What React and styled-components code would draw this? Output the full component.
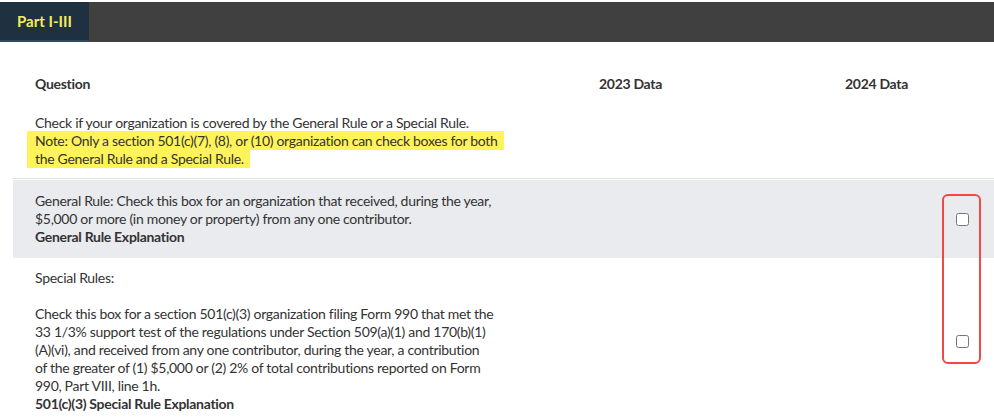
import React from "react";
import styled, { createGlobalStyle } from "styled-components";

const GlobalStyle = createGlobalStyle`
  body {
    margin: 0;
    background: #ffffff;
    font-family: Lato, "Liberation Sans", sans-serif;
    color: #333333;
  }
`;

const TopBar = styled.div`
  margin-top: 2px;
  height: 40px;
  background: #404040;
  display: flex;
`;

const Tab = styled.div`
  width: 89px;
  background: #1f3140;
  border-bottom: 2px solid #2d4b5b;
  box-sizing: border-box;
  color: #f2ec5c;
  font-weight: 700;
  font-size: 15px;
  display: flex;
  align-items: center;
  justify-content: center;
`;

const Table = styled.div`
  position: relative;
  margin: 20px 0 0 13px;
  letter-spacing: -0.3px;
`;

const Row = styled.div`
  display: grid;
  grid-template-columns: 560px 246px 1fr;
  background: ${(p) => (p.$shaded ? "#e9ebee" : "transparent")};
  border-bottom: ${(p) => (p.$divider ? "1px solid #e4e4e4" : "none")};
  margin-bottom: ${(p) => (p.$divider ? "1px" : "0")};
`;

const HeadCell = styled.div`
  padding: 13px 0 11px ${(p) => (p.$first ? "22px" : "26px")};
  font-size: 14px;
  line-height: 18px;
  font-weight: 700;
  color: #333;
`;

const QuestionCell = styled.div`
  padding: ${(p) => p.$pad || "11px"} 0 ${(p) => p.$pad || "11px"} 22px;
  font-size: 14px;
  line-height: 18px;
  color: #333;
  white-space: nowrap;
`;

const Highlight = styled.span`
  background: #fff35c;
  padding: 1px 6px 1px 8px;
  margin-left: -8px;
  -webkit-box-decoration-break: clone;
  box-decoration-break: clone;
`;

const Strong = styled.div`
  font-weight: 700;
`;

const Gap = styled.div`
  height: 18px;
`;

const DataCell = styled.div`
  display: flex;
  align-items: center;
  justify-content: ${(p) => (p.$end ? "flex-end" : "flex-start")};
  padding-right: 25px;
`;

const Check = styled.input.attrs({ type: "checkbox" })`
  width: 13px;
  height: 13px;
  margin: 0;
`;

const Annotation = styled.div`
  position: absolute;
  top: 132px;
  right: 13px;
  width: 39px;
  height: 170px;
  box-sizing: border-box;
  border: 2.5px solid #f24848;
  border-radius: 6px;
  pointer-events: none;
`;

export default function App() {
  return (
    <>
      <GlobalStyle />
      <TopBar>
        <Tab>Part I-III</Tab>
      </TopBar>
      <Table>
        <Row>
          <HeadCell $first>Question</HeadCell>
          <HeadCell>2023 Data</HeadCell>
          <HeadCell>2024 Data</HeadCell>
        </Row>
        <Row $divider>
          <QuestionCell $pad="10px">
            Check if your organization is covered by the General Rule or a Special Rule.
            <br />
            <Highlight>
              Note: Only a section 501(c)(7), (8), or (10) organization can check boxes for both
              <br />
              the General Rule and a Special Rule.
            </Highlight>
          </QuestionCell>
          <DataCell />
          <DataCell />
        </Row>
        <Row $shaded>
          <QuestionCell $pad="12px">
            General Rule: Check this box for an organization that received, during the year,
            <br />
            $5,000 or more (in money or property) from any one contributor.
            <Strong>General Rule Explanation</Strong>
          </QuestionCell>
          <DataCell />
          <DataCell $end>
            <Check />
          </DataCell>
        </Row>
        <Row>
          <QuestionCell>
            Special Rules:
            <Gap />
            Check this box for a section 501(c)(3) organization filing Form 990 that met the
            <br />
            33 1/3% support test of the regulations under Section 509(a)(1) and 170(b)(1)
            <br />
            (A)(vi), and received from any one contributor, during the year, a contribution
            <br />
            of the greater of (1) $5,000 or (2) 2% of total contributions reported on Form
            <br />
            990, Part VIII, line 1h.
            <Strong>501(c)(3) Special Rule Explanation</Strong>
          </QuestionCell>
          <DataCell />
          <DataCell $end>
            <Check />
          </DataCell>
        </Row>
        <Annotation />
      </Table>
    </>
  );
}
